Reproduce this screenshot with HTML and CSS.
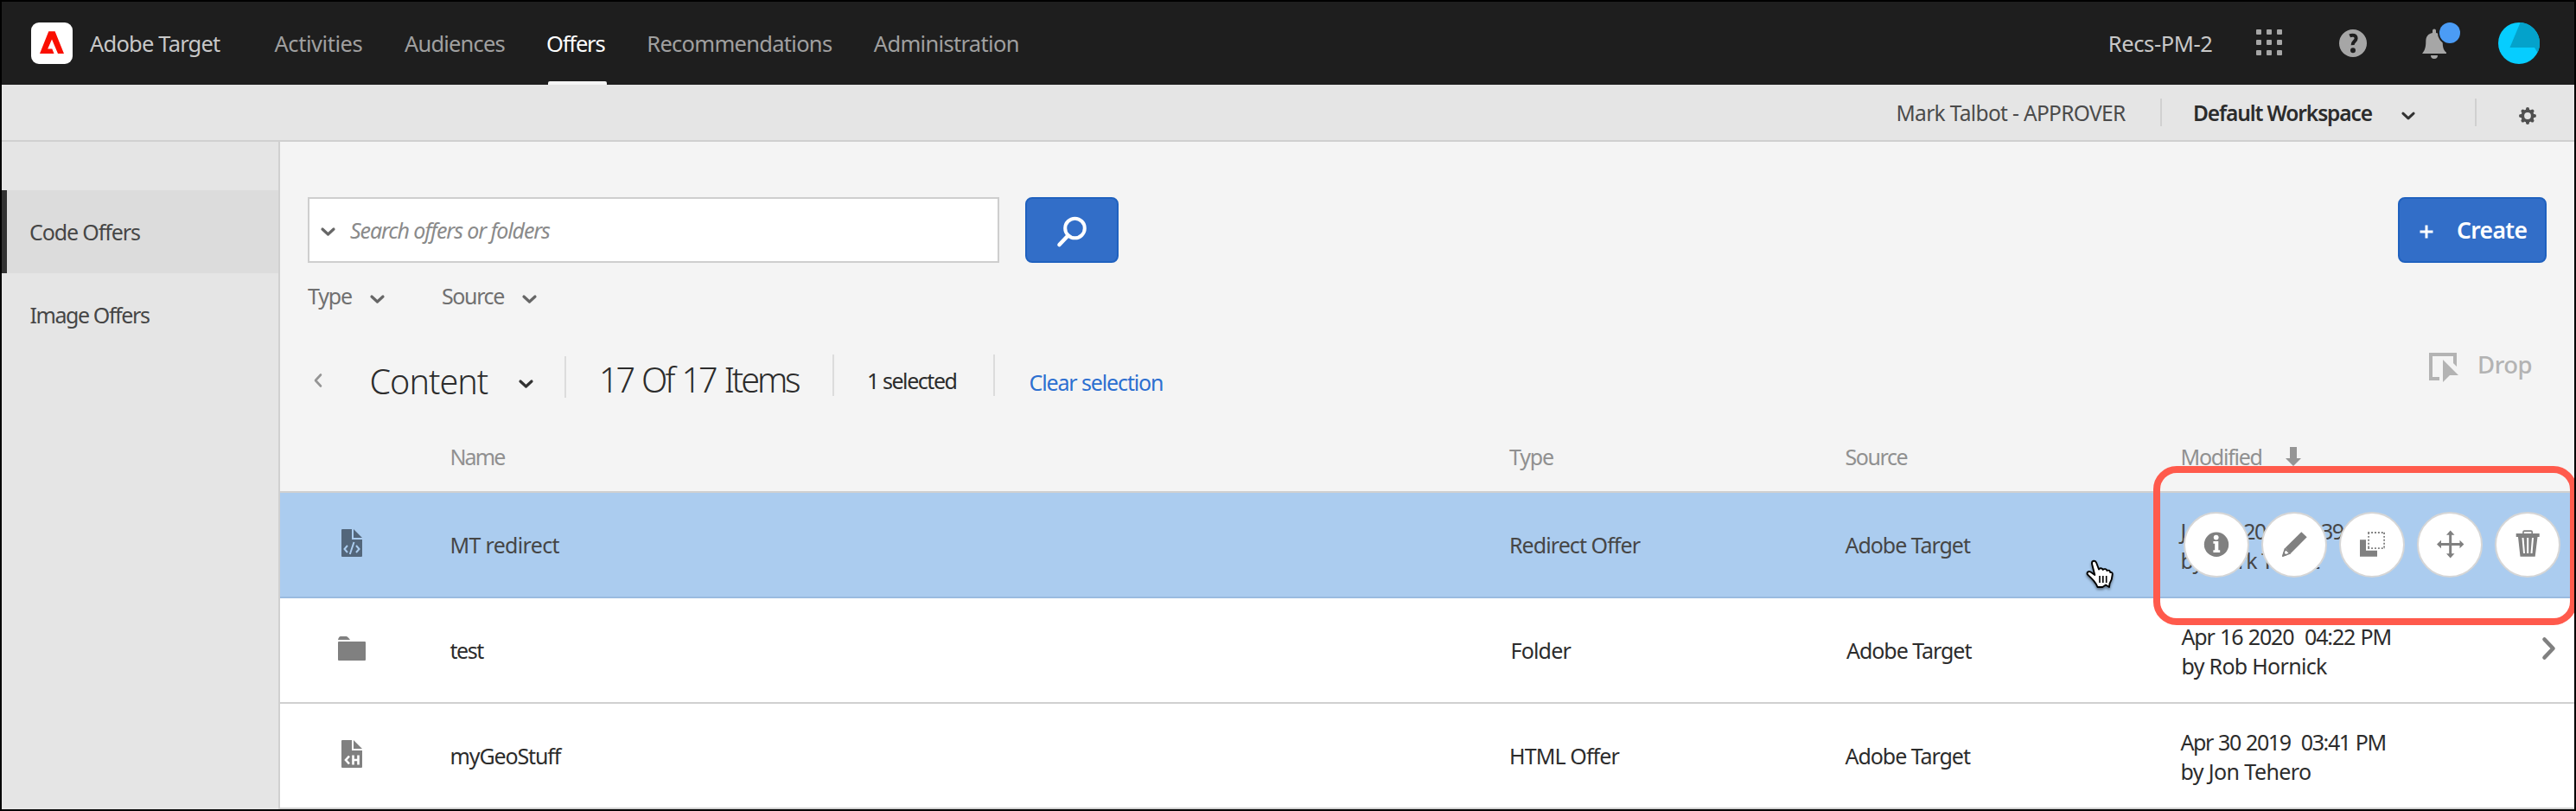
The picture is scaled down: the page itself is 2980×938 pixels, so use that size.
FILE: index.html
```html
<!DOCTYPE html>
<html lang="en">
<head>
<meta charset="utf-8">
<title>Adobe Target - Offers</title>
<link rel="stylesheet" href="styles.css">
</head>
<body>
<div class="app">
  <header class="topbar">
    <svg class="logo" viewBox="0 0 48 48"><rect width="48" height="48" rx="9" fill="#fff"/><path fill="#fa0f00" d="M20.3 10.3H27.6L38 36H31L24 19.5L19.2 30.5H24.3L26.5 36H10Z"/></svg>
    <span class="brand">Adobe Target</span>
    <nav class="nav">
      <a class="nav-activities">Activities</a>
      <a class="nav-audiences">Audiences</a>
      <a class="nav-offers active">Offers</a>
      <a class="nav-recs">Recommendations</a>
      <a class="nav-admin">Administration</a>
    </nav>
    <span class="org">Recs-PM-2</span>
    <svg class="icon-apps" viewBox="0 0 30 30" fill="#a6a6a6"><rect width="6" height="6" rx="1"/><rect x="12" width="6" height="6" rx="1"/><rect x="24" width="6" height="6" rx="1"/><rect y="12" width="6" height="6" rx="1"/><rect x="12" y="12" width="6" height="6" rx="1"/><rect x="24" y="12" width="6" height="6" rx="1"/><rect y="24" width="6" height="6" rx="1"/><rect x="12" y="24" width="6" height="6" rx="1"/><rect x="24" y="24" width="6" height="6" rx="1"/></svg>
    <svg class="icon-help" viewBox="0 0 32 32"><circle cx="16" cy="16" r="16" fill="#a6a6a6"/><path d="M12.2 7.4C15.6 5.8 19.6 6.8 19.6 10.4C19.6 13.8 15.4 13.9 15.6 18.2" fill="none" stroke="#1e1e1e" stroke-width="4"/><circle cx="16" cy="24.2" r="3" fill="#1e1e1e"/></svg>
    <svg class="icon-bell" viewBox="0 0 46 48"><path fill="#a6a6a6" d="M2 36C5 32.500 6.300 29 6.300 22C6.300 16 9 13 14 12V9.500A2 2 0 0 1 18 9.500V12C23 13 25.700 16 25.700 22C25.700 29 27 32.500 30 34.800V36ZM12 38H20A4 4 0 0 1 12 38Z"/><circle cx="34" cy="12" r="14" fill="#1e1e1e"/><circle cx="34" cy="12" r="12" fill="#4b9cf5"/></svg>
    <svg class="avatar" viewBox="0 0 48 48"><circle cx="24" cy="24" r="24" fill="#06cdff"/><path fill="#04a2cb" d="M13.500 29L25.600 0A24 24 0 0 1 45.500 34.700L42 29Z"/></svg>
  </header>

  <div class="subbar">
    <span class="user">Mark Talbot - APPROVER</span>
    <i class="rule"></i>
    <span class="workspace">Default Workspace</span>
    <svg class="chev" viewBox="0 0 17 10"><path d="M2 2L8.500 8L15 2"/></svg>
    <i class="rule rule-gear"></i>
    <svg class="icon-gear" viewBox="0 0 20 20"><g stroke="#505050" stroke-width="4" stroke-linecap="round"><path d="M10 2V18M2 10H18M4.500 4.500L15.500 15.500M15.500 4.500L4.500 15.500"/></g><circle cx="10" cy="10" r="7.600" fill="#505050"/><circle cx="10" cy="10" r="3.900" fill="#e5e5e5"/></svg>
  </div>

  <div class="body">
    <aside class="side">
      <a class="side-item current"><span class="t-code">Code Offers</span></a>
      <a class="side-item"><span class="t-image">Image Offers</span></a>
    </aside>

    <main class="main">
      <div class="tools">
        <div class="search">
          <svg class="chev" viewBox="0 0 17 10"><path d="M2 2L8.500 8L15 2"/></svg>
          <span class="placeholder">Search offers or folders</span>
        </div>
        <button class="btn btn-search"><svg viewBox="0 0 36 36"><circle cx="21.500" cy="14" r="11.300" fill="none" stroke="#fff" stroke-width="4"/><path d="M13.500 22.500L3.500 33" stroke="#fff" stroke-width="4.600" stroke-linecap="round"/></svg></button>
        <button class="btn btn-create"><svg viewBox="0 0 16 16"><path d="M8 .5V15.500M.5 8H15.500" stroke="#fff" stroke-width="3"/></svg><span>Create</span></button>
      </div>

      <div class="filters">
        <span class="f-type">Type</span>
        <svg class="chev" viewBox="0 0 17 10"><path d="M2 2L8.500 8L15 2"/></svg>
        <span class="f-source">Source</span>
        <svg class="chev" viewBox="0 0 17 10"><path d="M2 2L8.500 8L15 2"/></svg>
      </div>

      <div class="heading">
        <svg class="back" viewBox="0 0 10 16"><path d="M8 1.500L2 8L8 14.500"/></svg>
        <h1 class="title">Content</h1>
        <svg class="chev chev-title" viewBox="0 0 17 10"><path d="M2 2L8.500 8L15 2"/></svg>
        <i class="sep sep-first"></i>
        <span class="count">17 Of 17 Items</span>
        <i class="sep"></i>
        <span class="selected-count">1 selected</span>
        <i class="sep"></i>
        <a class="clear">Clear selection</a>
        <svg class="icon-drop" viewBox="0 0 34 34" fill="#b3b3b3"><path d="M0 0H32V16L28 12V4H4V28H12V32H0Z"/><path d="M16 8L34 26H24L16 34Z"/></svg>
        <span class="drop">Drop</span>
      </div>

      <div class="grid-row columns">
        <span></span>
        <span class="c-name">Name</span>
        <span class="c-type">Type</span>
        <span class="c-source">Source</span>
        <span class="c-mod">Modified<svg viewBox="0 0 18 22"><path fill="#959595" d="M5 0H13V13H18L9 22L0 13H5Z"/></svg></span>
      </div>

      <div class="grid-row row selected">
        <svg class="kind" viewBox="0 0 32 32"><path fill="#53667b" d="M5 0H16V12H28V31A1 1 0 0 1 27 32H5A1 1 0 0 1 4 31V1A1 1 0 0 1 5 0ZM18 0L28 10H18Z"/><path fill="none" stroke="#abccef" stroke-width="2" d="M11 19L7.500 23L11 27M21 19L24.500 23L21 27M18.500 15L13.800 29"/></svg>
        <span class="n-mt">MT redirect</span>
        <span class="t-redirect">Redirect Offer</span>
        <span class="src">Adobe Target</span>
        <div class="when"><div class="d1"><span class="initial">J</span>un 11 2019&nbsp; 01:39 PM</div><div class="b1">by Mark Talbot</div></div>
        <div class="actions">
          <span class="act"><svg viewBox="0 0 32 32"><circle cx="16" cy="15.700" r="14.200"/><circle cx="15.700" cy="7.600" r="2.900" fill="#fff"/><path fill="#fff" d="M12.400 12H18.300V22.300H20.200V25H12.400V22.300H14.200V14.700H12.400Z"/></svg></span>
          <span class="act"><svg viewBox="0 0 32 32"><path d="M24.300 1.300L30.700 7.300L12 26L5.800 19.600Z"/><path fill="#fff" stroke="#808080" stroke-width="1.800" stroke-linejoin="round" d="M5.600 20.600L2.900 29L11.200 26Z"/><path d="M2 30L3.800 24.500L7.400 28.200Z"/></svg></span>
          <span class="act"><svg viewBox="0 0 32 32"><path d="M2 10.300H9V22.700H22V29.700H2Z"/><path fill="none" stroke="#808080" stroke-width="1.800" stroke-dasharray="1.950 1.950" d="M11.200 2H31M30.100 2V21M11.200 20.200H31M12.100 2V21"/></svg></span>
          <span class="act"><svg viewBox="0 0 32 32"><path d="M16.700 -.5L21.500 4.800H18.200V14H27.500V10.800L32.400 15.500L27.500 20.200V17H18.200V26.300H21.500L16.700 31.500L12 26.300H15.200V17H6V20.200L1 15.500L6 10.800V14H15.200V4.800H12Z"/></svg></span>
          <span class="act"><svg viewBox="0 0 32 32"><path fill="none" stroke="#808080" stroke-width="1.600" d="M11 4V1.200Q11 .1 12.200 .1H20Q21.200 .1 21.200 1.200V4"/><path d="M2.700 3H29.700V7H27.500L24.700 29.700H7.500L5 7H2.700Z"/><path stroke="#fff" stroke-width="2" d="M10.500 8L12 26M16.200 8V26M22 8L20.500 26"/></svg></span>
        </div>
      </div>

      <div class="grid-row row shifted">
        <svg class="kind" viewBox="0 0 32 32" fill="#808080"><path d="M0 6Q1 2 3 2H9.500Q11 2 14 6Z"/><rect y="8" width="32" height="22" rx="1"/></svg>
        <span class="n-test">test</span>
        <span class="t-folder">Folder</span>
        <span class="src">Adobe Target</span>
        <div class="when"><div class="d2">Apr 16 2020&nbsp; 04:22 PM</div><div class="b2">by Rob Hornick</div></div>
        <svg class="open" viewBox="0 0 16 26"><path d="M2.500 2.500L12.500 13L2.500 23.500"/></svg>
      </div>

      <div class="grid-row row">
        <svg class="kind" viewBox="0 0 32 32"><path fill="#808080" d="M5 0H16V12H28V31A1 1 0 0 1 27 32H5A1 1 0 0 1 4 31V1A1 1 0 0 1 5 0ZM18 0L28 10H18Z"/><path fill="none" stroke="#fff" stroke-width="2.600" d="M13 18.500L9 23L13 27.500M17.500 17.500V28.500M23.500 17.500V28.500M17 23H24"/></svg>
        <span class="n-geo">myGeoStuff</span>
        <span class="t-html">HTML Offer</span>
        <span class="src">Adobe Target</span>
        <div class="when"><div class="d3">Apr 30 2019&nbsp; 03:41 PM</div><div class="b3">by Jon Tehero</div></div>
      </div>
    </main>
  </div>

  <div class="callout"></div>
  <svg class="pointer" viewBox="0 0 36 42"><path fill="#fff" stroke="#000" stroke-width="1.900" stroke-linejoin="round" d="M8 6C7.600 2.200 12 1.600 13.200 5L16 12.500C17 10.600 20 11 20.700 13C22 11.500 25 12 25.400 14C27.500 13 29 14 29.200 16C31 15.500 32 16.500 31.700 18.500C31.500 23 30.500 26 28.500 29L28 33L24 30.500L20.300 33H14.500C13 29 11.500 27.500 9 24.500C6 21 4 20 2.600 18C2 15.500 4.500 14.200 6.500 15.500L11.300 19Z"/><path stroke="#000" stroke-width="1.600" d="M17 20V28M20.800 20V28M24.700 20V28"/></svg>
</div>
</body>
</html>
```
FILE: styles.css
```css
* { box-sizing: border-box; }
body { margin: 0; background: #000; }
svg { display: block; flex: none; overflow: visible; }

.app {
  position: relative;
  width: 2980px;
  height: 938px;
  overflow: hidden;
  border: 2px solid #000;
  display: flex;
  flex-direction: column;
  font: 400 25px/34px "Noto Sans", "Open Sans", sans-serif;
  color: #2c2c2c;
  white-space: nowrap;
}

.chev { width: 17px; height: 10px; }
.chev path { fill: none; stroke: #666; stroke-width: 3.2; stroke-linecap: round; stroke-linejoin: round; }

/* Global header */
.topbar {
  flex: none;
  height: 96px;
  padding: 0 40px 0 34px;
  display: flex;
  align-items: center;
  background: #1e1e1e;
  font-size: 25.5px;
}
.logo { width: 48px; height: 48px; }
.brand { margin-left: 20px; width: 213.500px; color: #c8c8c8; letter-spacing: -.8px; }
.nav { display: flex; height: 96px; line-height: 96px; color: #a0a0a0; }
.nav-activities { width: 150.500px; letter-spacing: -.45px; }
.nav-audiences { width: 164px; letter-spacing: -.82px; }
.nav-offers { width: 116.300px; letter-spacing: -1.19px; }
.nav-recs { width: 262.500px; letter-spacing: -.72px; }
.nav-admin { letter-spacing: -.68px; }
.nav .active { position: relative; color: #fff; }
.nav .active::after {
  content: "";
  position: absolute;
  left: 2px;
  bottom: 0;
  width: 68px;
  height: 4px;
  border-radius: 2px 2px 0 0;
  background: #f5f5f5;
}
.org { margin-left: auto; width: 171.200px; color: #c8c8c8; letter-spacing: -.40px; }
.icon-apps { width: 30px; height: 30px; margin-bottom: 2px; }
.icon-help { width: 32px; height: 32px; margin-left: 66px; }
.icon-bell { width: 46px; height: 48px; margin-left: 62px; }
.avatar { width: 48px; height: 48px; margin-left: 44px; }

/* Workspace bar */
.subbar {
  flex: none;
  height: 66px;
  padding-right: 44px;
  display: flex;
  align-items: center;
  justify-content: flex-end;
  background: #e5e5e5;
  border-bottom: 2px solid #d0d0d0;
  font-size: 24.5px;
}
.user { width: 305.500px; padding-top: 1px; color: #4b4b4b; letter-spacing: -.66px; }
.rule { width: 2px; height: 32px; background: #d0d0d0; }
.workspace { margin-left: 36px; width: 241px; padding-top: 1px; font-weight: 600; letter-spacing: -1.120px; }
.subbar .chev { width: 16px; margin-top: 8px; }
.subbar .chev path { stroke: #323232; }
.rule-gear { margin-left: 69px; }
.icon-gear { width: 20px; height: 20px; margin: 8px 0 0 49px; }

.body { flex: 1; min-height: 0; display: flex; }

/* Sidebar */
.side {
  flex: none;
  width: 322px;
  padding-top: 56px;
  background: #e5e5e5;
  border-right: 2px solid #d0d0d0;
  color: #464646;
}
.side-item { display: flex; align-items: center; height: 96px; padding-left: 32.500px; }
.side-item.current { background: #dcdcdc; border-left: 6px solid #323232; padding-left: 26px; }
.t-code { letter-spacing: -1.110px; }
.t-image { letter-spacing: -1.420px; }

.main { flex: 1; min-width: 0; background: #f4f4f4; }

/* Search and create */
.tools { display: flex; align-items: center; height: 76px; margin: 64px 32px 0; }
.search {
  width: 800px;
  height: 76px;
  padding-left: 13px;
  display: flex;
  align-items: center;
  background: #fff;
  border: 2px solid #cecece;
}
.search .chev { margin-top: 4px; }
.placeholder { margin-left: 17px; color: #8a8a8a; font-style: italic; letter-spacing: -1.110px; }
.btn {
  height: 76px;
  padding: 0;
  display: flex;
  align-items: center;
  border: 2px solid #1f61bf;
  border-radius: 8px;
  background: #326ec8;
  color: #fff;
  font: 600 26.500px/34px "Noto Sans", sans-serif;
}
.btn-search { width: 108px; margin-left: 30px; justify-content: center; }
.btn-search svg { width: 36px; height: 36px; margin-top: 4px; }
.btn-create { width: 172px; margin-left: auto; padding-left: 23px; letter-spacing: -.65px; }
.btn-create svg { width: 16px; height: 16px; margin-top: 3px; }
.btn-create span { margin-left: 27px; }

/* Filters */
.filters { display: flex; align-items: center; height: 76px; padding-left: 32px; color: #707070; }
.filters .chev { margin-top: 8px; }
.f-type { width: 71.500px; letter-spacing: -1.180px; }
.f-source { margin-left: 66.500px; width: 93px; letter-spacing: -1.380px; }

/* List heading */
.heading { display: flex; align-items: center; height: 120px; padding-left: 39px; }
.back { width: 10px; height: 16px; }
.back path { fill: none; stroke: #959595; stroke-width: 2.600; stroke-linecap: round; stroke-linejoin: round; }
.title { margin: 1px 0 0 54.500px; width: 172px; font-size: 39.500px; line-height: 54px; font-weight: 300; letter-spacing: -1px; }
.chev-title { margin-top: 7px; }
.chev-title path { stroke: #323232; }
.sep { width: 2px; height: 48px; margin-bottom: 12px; background: #dcdcdc; }
.sep-first { margin: 0 0 8px 36.500px; }
.count { width: 270px; margin: 0 0 3px 38px; font-size: 39.500px; line-height: 54px; font-weight: 300; letter-spacing: -3.100px; word-spacing: 3px; }
.selected-count { margin-left: 38px; width: 146px; letter-spacing: -1.440px; }
.clear { margin: 4px 0 0 39.500px; color: #2c6fd0; letter-spacing: -1.130px; }
.icon-drop { width: 34px; height: 34px; margin: 0 0 30px auto; }
.drop { margin: 0 0 37px 22px; width: 112px; color: #b3b3b3; font-size: 27.500px; font-weight: 500; letter-spacing: -.46px; }

/* Table */
.grid-row {
  position: relative;
  display: grid;
  grid-template-columns: 196.500px 1225.500px 388.500px 388px 1fr;
  align-items: center;
}
.columns { height: 70px; padding-bottom: 12px; border-bottom: 2px solid #d0d0d0; color: #909090; }
.c-name { letter-spacing: -1.900px; }
.c-type { letter-spacing: -1.180px; }
.c-source { letter-spacing: -1.430px; }
.c-mod { display: flex; align-items: center; letter-spacing: -1.250px; }
.c-mod svg { width: 18px; height: 22px; margin-left: 27px; }
.row { height: 122px; background: #fff; border-bottom: 2px solid #d0d0d0; }
.row.selected { background: #abccef; border-color: #9abbe0; color: #464646; }
.row.shifted { grid-template-columns: 196.500px 1227px 388.500px 387.500px 1fr; }
.kind { width: 32px; height: 32px; margin: 0 0 4px 67px; }
.n-mt { letter-spacing: -.68px; }
.n-test { letter-spacing: -1.470px; }
.n-geo { letter-spacing: -1.120px; }
.t-redirect { letter-spacing: -.93px; }
.t-folder { letter-spacing: -.81px; }
.t-html { letter-spacing: -.89px; }
.src { letter-spacing: -1.050px; }
.when { padding-top: 3px; line-height: 33.400px; }
.initial { letter-spacing: 4px; }
.d1 { letter-spacing: -1.750px; }
.b1 { letter-spacing: -.90px; }
.d2 { letter-spacing: -1.150px; word-spacing: 1px; }
.b2 { letter-spacing: -.70px; }
.d3 { letter-spacing: -1.400px; word-spacing: 1px; }
.b3 { letter-spacing: -.60px; }

/* Hover actions float over the selected row */
.actions { position: absolute; top: 22px; right: 16px; display: flex; gap: 14px; }
.act {
  width: 76px;
  height: 76px;
  display: flex;
  align-items: center;
  justify-content: center;
  border: 2px solid #d6d6d6;
  border-radius: 50%;
  background: #fff;
}
.act svg { width: 32px; height: 32px; fill: #808080; }

.open { position: absolute; right: 21px; top: 45px; width: 16px; height: 26px; }
.open path { fill: none; stroke: #808080; stroke-width: 4.600; stroke-linecap: round; stroke-linejoin: round; }

.callout {
  position: absolute;
  left: 2489px;
  top: 537px;
  width: 490px;
  height: 184px;
  border: 8px solid #ff5a4c;
  border-radius: 27px;
}
.pointer {
  position: absolute;
  left: 2410px;
  top: 644px;
  width: 36px;
  height: 42px;
  filter: drop-shadow(0 2px 1.500px rgba(0, 0, 0, .45));
}
```
